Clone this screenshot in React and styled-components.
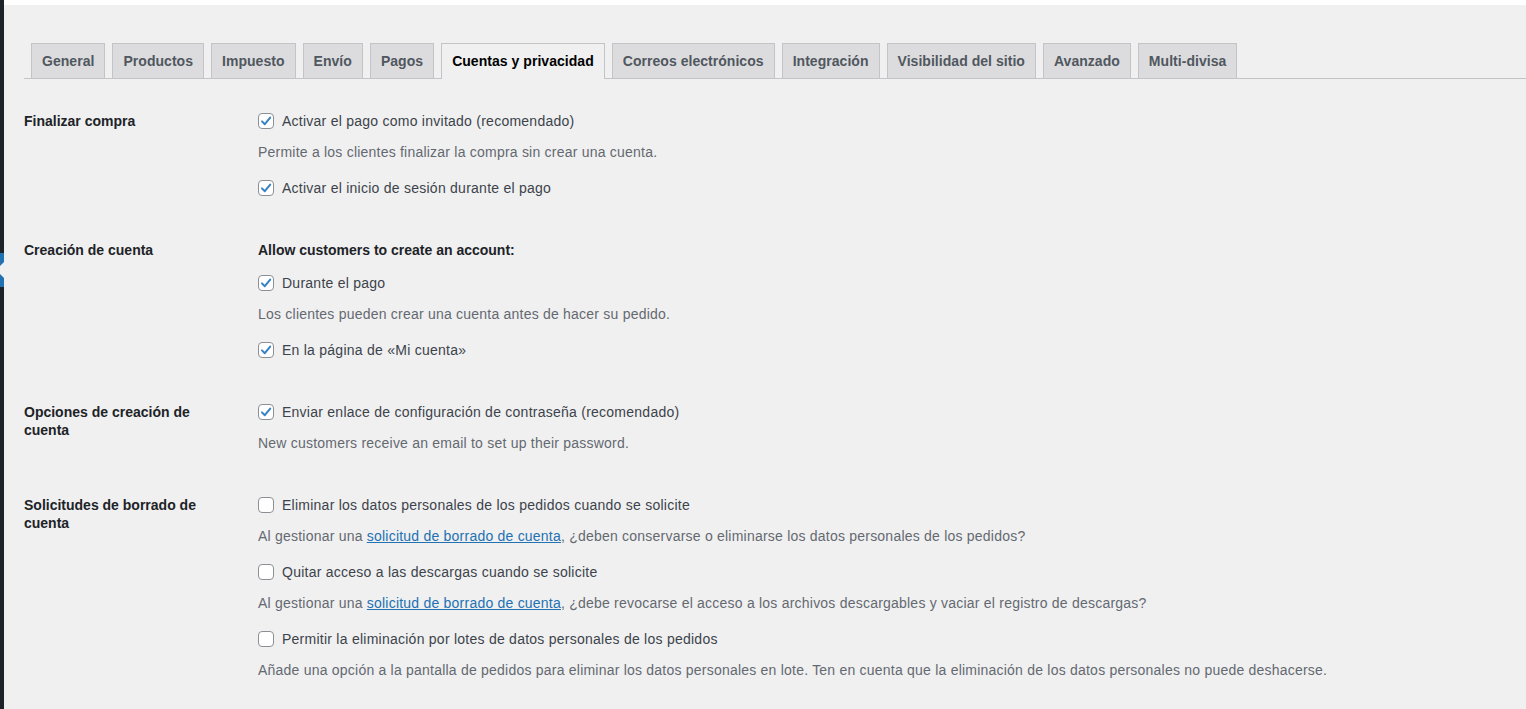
import React from "react";
import styled, { createGlobalStyle } from "styled-components";

const GlobalStyle = createGlobalStyle`
  html, body {
    margin: 0;
    padding: 0;
    background: #f0f0f1;
  }
  body {
    font-family: "Liberation Sans", Arial, sans-serif;
    font-size: 14px;
    color: #3c434a;
  }
`;

const Page = styled.div`
  display: flex;
  min-height: 709px;
  background: #f0f0f1;
`;

const AdminMenu = styled.div`
  width: 4px;
  flex-shrink: 0;
  background: #1d2327;
  display: flex;
  flex-direction: column;
`;

const CurrentItem = styled.div`
  position: relative;
  margin-top: 253px;
  height: 34px;
  background: #2271b1;

  &:after {
    content: "";
    position: absolute;
    right: 0;
    top: 50%;
    margin-top: -8px;
    border: 8px solid transparent;
    border-right-color: #f0f0f1;
  }
`;

const Main = styled.div`
  flex: 1;
  display: flex;
  flex-direction: column;
`;

const TopBar = styled.div`
  height: 5px;
  background: #ffffff;
`;

const Content = styled.div`
  padding: 38px 0 0 20px;
`;

const TabWrapper = styled.nav`
  display: flex;
  align-items: flex-end;
  border-bottom: 1px solid #c3c4c7;
  padding-left: 7px;
  gap: 7px;
`;

const Tab = styled.a`
  display: block;
  padding: 5px 10px;
  line-height: 24px;
  font-size: 14px;
  font-weight: 700;
  letter-spacing: 0.04px;
  border: 1px solid #c3c4c7;
  border-bottom: none;
  background: ${(p) => (p.$active ? "#f0f0f1" : "#dcdcde")};
  color: ${(p) => (p.$active ? "#000000" : "#50575e")};
  margin-bottom: ${(p) => (p.$active ? "-1px" : "0")};
  padding-bottom: ${(p) => (p.$active ? "6px" : "5px")};
  white-space: nowrap;
  cursor: pointer;
`;

const Form = styled.div`
  padding-top: 32px;
  display: flex;
  flex-direction: column;
  gap: 42px;
`;

const Section = styled.div`
  display: grid;
  grid-template-columns: 200px 1fr;
  column-gap: 34px;
`;

const Label = styled.div`
  font-weight: 700;
  color: #1d2327;
  line-height: 18px;
  padding-top: 1px;
`;

const Field = styled.div`
  display: flex;
  flex-direction: column;
`;

const Heading = styled.div`
  font-weight: 700;
  color: #1d2327;
  line-height: 20px;
  margin-bottom: 13px;
`;

const CheckRow = styled.label`
  display: flex;
  align-items: center;
  line-height: 20px;
  color: #3c434a;
  letter-spacing: 0.25px;
  margin-top: ${(p) => (p.$first ? "0" : "16px")};
`;

const Box = styled.span`
  width: 16px;
  height: 16px;
  box-sizing: border-box;
  border: 1px solid #8c8f94;
  border-radius: 4px;
  background: #ffffff;
  margin-right: 8px;
  display: flex;
  align-items: center;
  justify-content: center;
  flex-shrink: 0;
`;

const Description = styled.p`
  margin: 11px 0 0;
  line-height: 20px;
  color: #646970;
  letter-spacing: 0.22px;
`;

const Link = styled.a`
  color: #2271b1;
  text-decoration: underline;
`;

function Checkbox({ checked, children, first }) {
  return (
    <CheckRow $first={first}>
      <Box>
        {checked && (
          <svg width="12" height="12" viewBox="0 0 12 12">
            <path
              d="M2 6.4 L4.8 9.2 L10.2 2.6"
              fill="none"
              stroke="#3582c4"
              strokeWidth="2"
              strokeLinecap="round"
              strokeLinejoin="round"
            />
          </svg>
        )}
      </Box>
      {children}
    </CheckRow>
  );
}

const tabs = [
  "General",
  "Productos",
  "Impuesto",
  "Envío",
  "Pagos",
  "Cuentas y privacidad",
  "Correos electrónicos",
  "Integración",
  "Visibilidad del sitio",
  "Avanzado",
  "Multi-divisa",
];

export default function App() {
  return (
    <>
      <GlobalStyle />
      <Page>
        <AdminMenu>
          <CurrentItem />
        </AdminMenu>
        <Main>
          <TopBar />
          <Content>
            <TabWrapper>
              {tabs.map((t) => (
                <Tab key={t} $active={t === "Cuentas y privacidad"}>
                  {t}
                </Tab>
              ))}
            </TabWrapper>

            <Form>
              <Section>
                <Label>Finalizar compra</Label>
                <Field>
                  <Checkbox checked first>
                    Activar el pago como invitado (recomendado)
                  </Checkbox>
                  <Description>
                    Permite a los clientes finalizar la compra sin crear una cuenta.
                  </Description>
                  <Checkbox checked>Activar el inicio de sesión durante el pago</Checkbox>
                </Field>
              </Section>

              <Section>
                <Label>Creación de cuenta</Label>
                <Field>
                  <Heading>Allow customers to create an account:</Heading>
                  <Checkbox checked first>
                    Durante el pago
                  </Checkbox>
                  <Description>
                    Los clientes pueden crear una cuenta antes de hacer su pedido.
                  </Description>
                  <Checkbox checked>En la página de «Mi cuenta»</Checkbox>
                </Field>
              </Section>

              <Section>
                <Label>Opciones de creación de cuenta</Label>
                <Field>
                  <Checkbox checked first>
                    Enviar enlace de configuración de contraseña (recomendado)
                  </Checkbox>
                  <Description>
                    New customers receive an email to set up their password.
                  </Description>
                </Field>
              </Section>

              <Section>
                <Label>Solicitudes de borrado de cuenta</Label>
                <Field>
                  <Checkbox first>
                    Eliminar los datos personales de los pedidos cuando se solicite
                  </Checkbox>
                  <Description>
                    Al gestionar una <Link>solicitud de borrado de cuenta</Link>, ¿deben
                    conservarse o eliminarse los datos personales de los pedidos?
                  </Description>
                  <Checkbox>Quitar acceso a las descargas cuando se solicite</Checkbox>
                  <Description>
                    Al gestionar una <Link>solicitud de borrado de cuenta</Link>, ¿debe
                    revocarse el acceso a los archivos descargables y vaciar el registro de
                    descargas?
                  </Description>
                  <Checkbox>Permitir la eliminación por lotes de datos personales de los pedidos</Checkbox>
                  <Description>
                    Añade una opción a la pantalla de pedidos para eliminar los datos
                    personales en lote. Ten en cuenta que la eliminación de los datos
                    personales no puede deshacerse.
                  </Description>
                </Field>
              </Section>
            </Form>
          </Content>
        </Main>
      </Page>
    </>
  );
}
